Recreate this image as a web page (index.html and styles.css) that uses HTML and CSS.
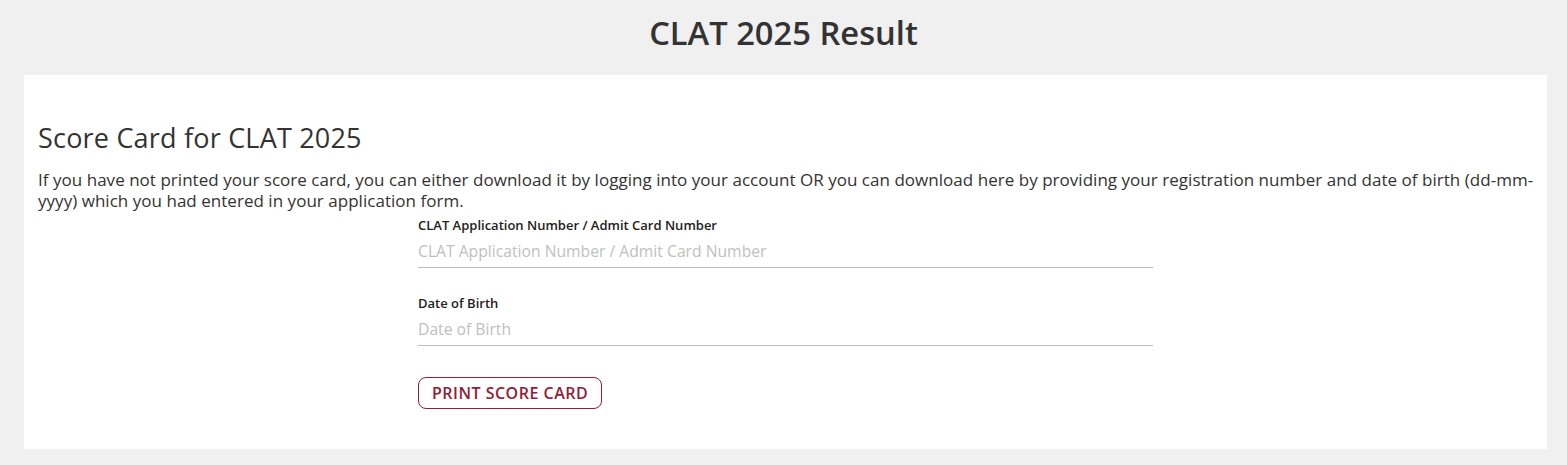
FILE: index.html
```html
<!DOCTYPE html>
<html lang="en">
<head>
  <meta charset="UTF-8" />
  <title>CLAT 2025 Result</title>
  <link rel="stylesheet" href="styles.css">
</head>
<body>
  <h1 class="page-title">CLAT 2025 Result</h1>

  <div class="card">
    <h2 class="card-title">Score Card for CLAT 2025</h2>
    <p class="intro">If you have not printed your score card, you can either download it by logging into your account OR you can download here by providing your registration number and date of birth (dd-mm-yyyy) which you had entered in your application form.</p>

    <form class="score-form" onsubmit="return false;">
      <div class="field">
        <label for="appNo">CLAT Application Number / Admit Card Number</label>
        <input id="appNo" type="text" placeholder="CLAT Application Number / Admit Card Number" />
      </div>
      <div class="field">
        <label for="dob">Date of Birth</label>
        <input id="dob" type="text" placeholder="Date of Birth" />
      </div>
      <button type="submit" class="print-btn">PRINT SCORE CARD</button>
    </form>
  </div>
</body>
</html>
```

FILE: styles.css
```css
html, body {
  margin: 0;
  padding: 0;
  background: #f0f0f0;
  font-family: 'Open Sans', 'Liberation Sans', sans-serif;
  color: #333;
}

.page-title {
  margin: 0;
  height: 75px;
  line-height: 66px;
  text-align: center;
  font-size: 32.7px;
  font-weight: 600;
  color: #333;
}

.card {
  margin: 0 20px 16px 24px;
  background: #fff;
  padding: 46px 6px 40px 14px;
}

.card-title {
  margin: 0 0 14px;
  font-size: 27px;
  font-weight: 400;
  letter-spacing: 0.2px;
  line-height: 34px;
  color: #333;
}

.intro {
  margin: 0;
  font-size: 17px;
  line-height: 21px;
  letter-spacing: 0.03px;
  color: #333;
}

.score-form {
  width: 735px;
  margin: 5px 0 0 380px;
}

.field {
  display: flex;
  flex-direction: column;
  margin-bottom: 26px;
}

.field label {
  font-size: 13px;
  font-weight: 600;
  color: #222;
  line-height: 18px;
}

.field input {
  height: 22px;
  border: none;
  border-bottom: 1px solid #bdbdbd;
  outline: none;
  padding: 6px 0 5px;
  font-family: inherit;
  font-size: 15.7px;
  color: #333;
  background: transparent;
}

.field input::placeholder {
  color: #c0c0c0;
}

.print-btn {
  margin-top: 5px;
  height: 32px;
  padding: 0 13px;
  background: #fff;
  border: 1px solid #8e2037;
  border-radius: 8px;
  color: #8e2037;
  font-family: inherit;
  font-size: 16px;
  font-weight: 600;
  letter-spacing: 0.5px;
  cursor: pointer;
}
```
